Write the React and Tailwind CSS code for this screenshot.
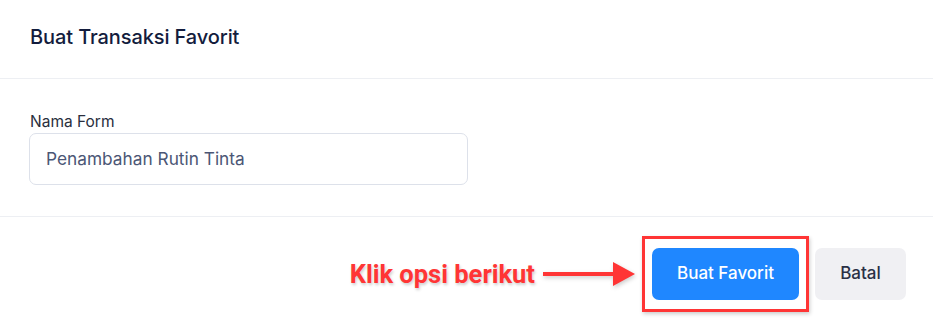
export default function App() {
  return (
    <div className="w-[933px] h-[323px] bg-white font-['Inter',sans-serif] overflow-hidden">
      <div className="h-[79px] px-[30px] flex items-center pb-[5px] border-b border-[#edeff3]">
        <h1 className="text-[20px] font-medium text-[#131c3d] tracking-[-0.1px]">Buat Transaksi Favorit</h1>
      </div>
      <div className="px-[29px] pt-[33px] pb-[31px] border-b border-[#edeff3]">
        <div className="text-[15.5px] leading-[20px] text-[#2a2f3d] pl-[1px]">Nama Form</div>
        <div className="mt-[1px] w-[439px] h-[52px] rounded-[7px] border border-[#dde1ea] flex items-center px-[16px]">
          <span className="text-[17.3px] text-[#4b5675]">Penambahan Rutin Tinta</span>
        </div>
      </div>
      <div className="flex justify-end items-center pt-[19px] pr-[27px]">
        <div className="flex items-center mr-[5px]">
          <span className="font-['Roboto',sans-serif] font-bold text-[25.5px] text-[#ff3535] [text-shadow:1px_2px_3px_rgba(0,0,0,0.2)]">Klik opsi berikut</span>
          <svg width="94" height="26" viewBox="0 0 94 26" className="ml-[8px] [filter:drop-shadow(1px_2px_2px_rgba(0,0,0,0.2))]">
            <rect x="0" y="11" width="72" height="4" fill="#ff3535" />
            <polygon points="70,1 92,13 70,25" fill="#ff3535" />
          </svg>
        </div>
        <div className="border-[3px] border-[#ff3535] px-[7px] py-[9px] [box-shadow:1px_2px_4px_rgba(0,0,0,0.2)]">
          <button className="w-[147px] h-[52px] rounded-[7px] bg-[#1f87ff] text-white text-[17px] font-medium">Buat Favorit</button>
        </div>
        <button className="ml-[6px] w-[91px] h-[52px] rounded-[7px] bg-[#f0f0f3] text-[#2a3045] text-[17px] font-medium">Batal</button>
      </div>
    </div>
  );
}
